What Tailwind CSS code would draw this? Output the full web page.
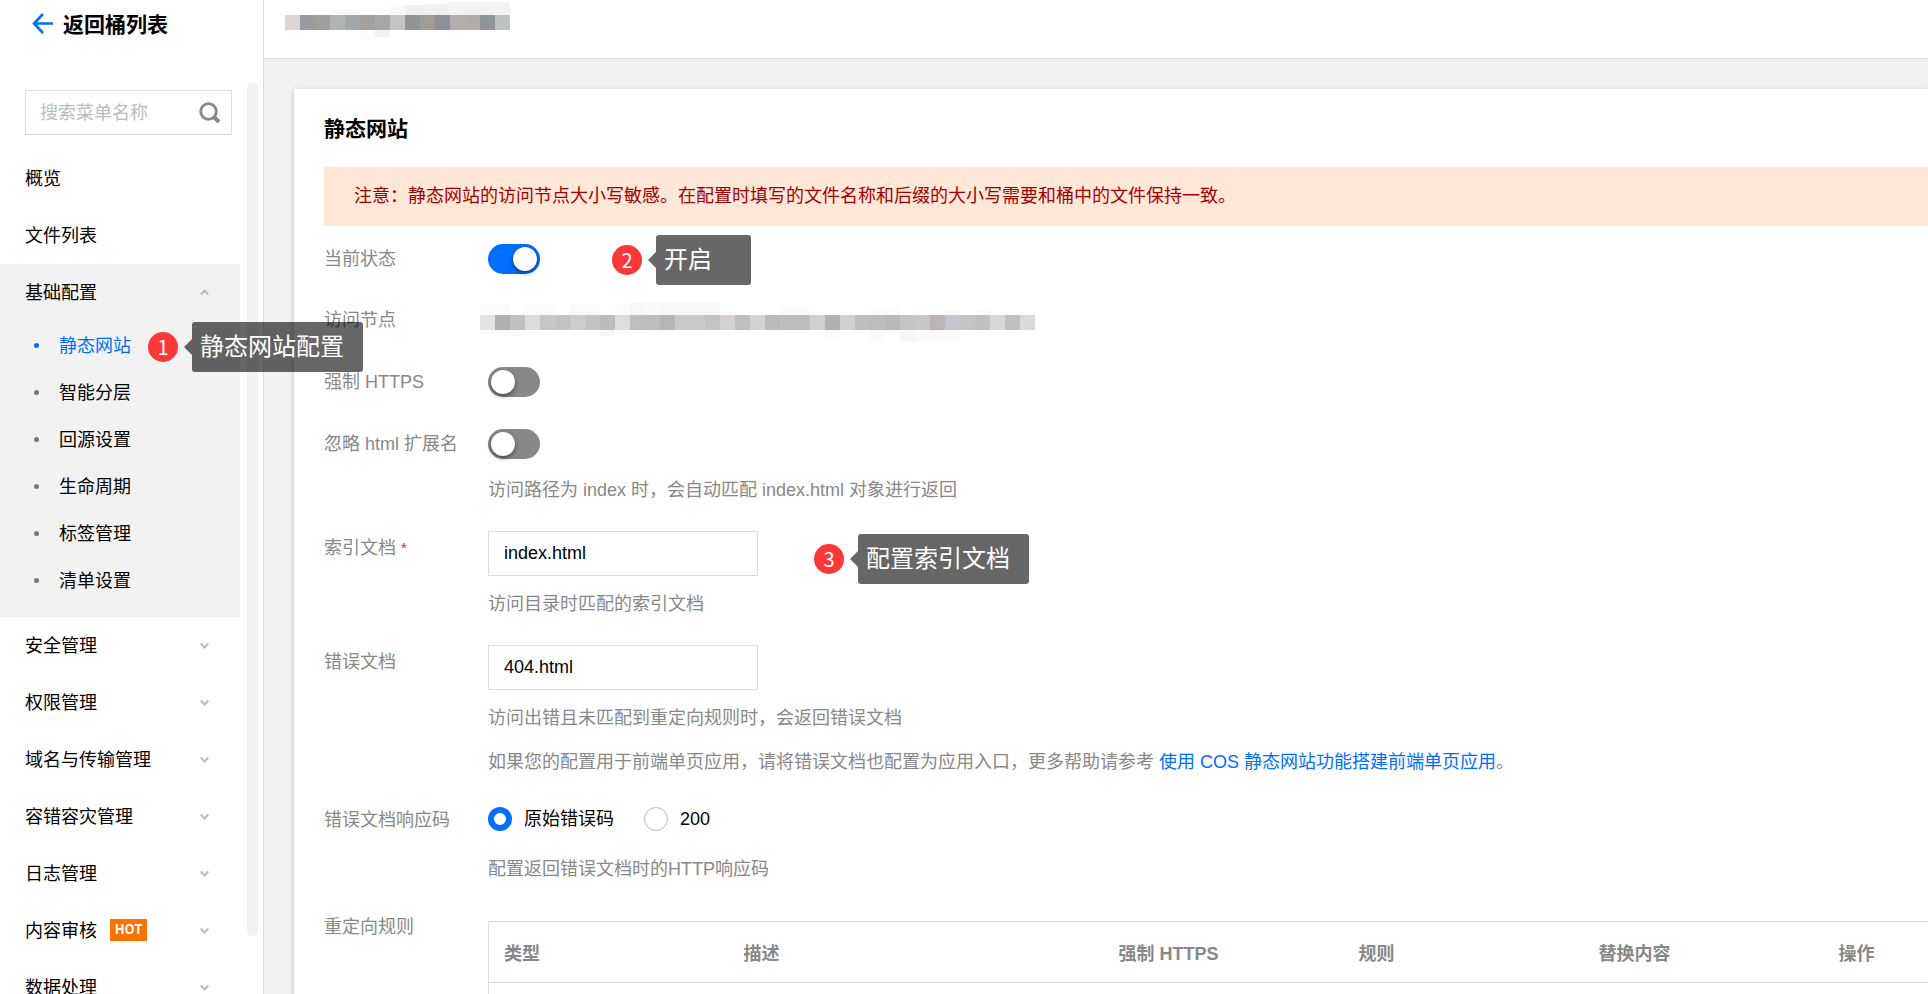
<!DOCTYPE html>
<html lang="zh-CN">
<head>
<meta charset="utf-8">
<title>静态网站</title>
<script src="https://cdn.jsdelivr.net/npm/@tailwindcss/browser@4"></script>
</head>
<body class="bg-white">
<div class="flex h-screen overflow-hidden bg-[#f2f2f2] font-['Liberation_Sans','Noto_Sans_CJK_SC',sans-serif] text-[18px] leading-6 text-black">

  <!-- Sidebar -->
  <aside class="relative z-10 w-[264px] shrink-0 border-r border-[#ddd] bg-white">
    <a href="#" class="flex h-[50px] items-center gap-[10px] pl-8 text-[21px] font-bold">
      <svg class="-mt-1 size-[21px]" viewBox="0 0 21 21" fill="none" stroke="#006eff" stroke-width="2.6" aria-hidden="true"><path d="M11 1 2 10.500l9 9.500M2 10.500h19"/></svg>
      <span>返回桶列表</span>
    </a>
    <div class="mt-10 mr-[31px] ml-[25px] flex h-[45px] items-center border border-[#ddd] pr-[10px] pl-[14px]">
      <input type="text" aria-label="搜索菜单名称" placeholder="搜索菜单名称" class="w-0 min-w-0 flex-1 outline-none placeholder:text-[#bbb]">
      <svg class="size-[22px]" viewBox="0 0 22 22" fill="none" stroke="#888" aria-hidden="true"><circle cx="9.500" cy="9.500" r="7.800" stroke-width="2.800"/><path d="m15 15 5 5" stroke-width="4"/></svg>
    </div>
    <div class="absolute top-[82px] right-[5px] bottom-[58px] w-[11px] rounded-full bg-[#f2f2f2]"></div>

    <nav class="mt-[15px] mr-[23px]">
      <a href="#" class="flex h-[57px] items-center pl-[25px]">概览</a>
      <a href="#" class="flex h-[57px] items-center pl-[25px]">文件列表</a>
      <div class="bg-[#f2f2f2] pb-[13px]">
        <button class="flex h-[57px] w-full items-center justify-between pr-[31px] pl-[25px]">基础配置
          <svg class="h-[7px] w-[9px]" viewBox="0 0 9 7" fill="none" stroke="#bbb" stroke-width="2" aria-hidden="true"><path d="m.7 5.500 3.800-4 3.800 4"/></svg></button>
        <ul class="pt-px">
          <li class="relative">
            <a href="#" class="flex h-[47px] items-center gap-5 pl-[34px] text-[#006eff]"><span class="size-[5px] rounded-full bg-[#006eff]"></span>静态网站</a>
            <div class="absolute top-0 left-[148px] flex items-center whitespace-nowrap">
              <span class="flex size-[30px] items-center justify-center rounded-full bg-[#fc3838] font-['Noto_Sans_CJK_SC',sans-serif] text-[20px] text-white">1</span>
              <svg class="ml-[6px] h-4 w-2" viewBox="0 0 8 16" fill="#000" fill-opacity=".6" aria-hidden="true"><path d="M0 8 8 0v16z"/></svg>
              <span class="flex h-[50px] min-w-[95px] items-center rounded-[3px] bg-black/60 pr-[19px] pl-2 text-[24px] text-white">静态网站配置</span>
            </div>
          </li>
          <li><a href="#" class="flex h-[47px] items-center gap-5 pl-[34px]"><span class="size-[5px] rounded-full bg-[#777]"></span>智能分层</a></li>
          <li><a href="#" class="flex h-[47px] items-center gap-5 pl-[34px]"><span class="size-[5px] rounded-full bg-[#777]"></span>回源设置</a></li>
          <li><a href="#" class="flex h-[47px] items-center gap-5 pl-[34px]"><span class="size-[5px] rounded-full bg-[#777]"></span>生命周期</a></li>
          <li><a href="#" class="flex h-[47px] items-center gap-5 pl-[34px]"><span class="size-[5px] rounded-full bg-[#777]"></span>标签管理</a></li>
          <li><a href="#" class="flex h-[47px] items-center gap-5 pl-[34px]"><span class="size-[5px] rounded-full bg-[#777]"></span>清单设置</a></li>
        </ul>
      </div>
      <button class="flex h-[57px] w-full items-center justify-between pr-[31px] pl-[25px]">安全管理
        <svg class="h-[7px] w-[9px]" viewBox="0 0 9 7" fill="none" stroke="#bbb" stroke-width="2" aria-hidden="true"><path d="m.7 1.500 3.800 4 3.800-4"/></svg></button>
      <button class="flex h-[57px] w-full items-center justify-between pr-[31px] pl-[25px]">权限管理
        <svg class="h-[7px] w-[9px]" viewBox="0 0 9 7" fill="none" stroke="#bbb" stroke-width="2" aria-hidden="true"><path d="m.7 1.500 3.800 4 3.800-4"/></svg></button>
      <button class="flex h-[57px] w-full items-center justify-between pr-[31px] pl-[25px]">域名与传输管理
        <svg class="h-[7px] w-[9px]" viewBox="0 0 9 7" fill="none" stroke="#bbb" stroke-width="2" aria-hidden="true"><path d="m.7 1.500 3.800 4 3.800-4"/></svg></button>
      <button class="flex h-[57px] w-full items-center justify-between pr-[31px] pl-[25px]">容错容灾管理
        <svg class="h-[7px] w-[9px]" viewBox="0 0 9 7" fill="none" stroke="#bbb" stroke-width="2" aria-hidden="true"><path d="m.7 1.500 3.800 4 3.800-4"/></svg></button>
      <button class="flex h-[57px] w-full items-center justify-between pr-[31px] pl-[25px]">日志管理
        <svg class="h-[7px] w-[9px]" viewBox="0 0 9 7" fill="none" stroke="#bbb" stroke-width="2" aria-hidden="true"><path d="m.7 1.500 3.800 4 3.800-4"/></svg></button>
      <button class="flex h-[57px] w-full items-center justify-between pr-[31px] pl-[25px]"><span class="flex items-start gap-[13px]">内容审核<span class="flex h-[22px] w-[37px] items-center justify-center bg-[#ff7200] pb-[2px] font-['Noto_Sans_CJK_SC',sans-serif] text-[13px] leading-none font-bold text-white">HOT</span></span>
        <svg class="h-[7px] w-[9px]" viewBox="0 0 9 7" fill="none" stroke="#bbb" stroke-width="2" aria-hidden="true"><path d="m.7 1.500 3.800 4 3.800-4"/></svg></button>
      <button class="flex h-[57px] w-full items-center justify-between pr-[31px] pl-[25px]">数据处理
        <svg class="h-[7px] w-[9px]" viewBox="0 0 9 7" fill="none" stroke="#bbb" stroke-width="2" aria-hidden="true"><path d="m.7 1.500 3.800 4 3.800-4"/></svg></button>
    </nav>
  </aside>

  <div class="flex min-w-0 flex-1 flex-col">
    <!-- Bucket name, masked -->
    <header class="h-[59px] shrink-0 border-b border-[#ddd] bg-white pl-[21px]">
      <svg class="h-[42px] w-[225px]" viewBox="0 0 225 42" shape-rendering="crispEdges" role="img" aria-label="存储桶名称">
        <path fill="#f9f9f9" d="M45 9h30v6H45zM105 5h15v10h-15z"/><path fill="#f0f0ee" d="M120 5h20v10h-20zM140 4h22v11h-22z"/><path fill="#f2f2f2" d="M162 2h63v13h-63z"/><path fill="#fcfcfc" d="M75 30h15v10H75z"/><path fill="#f1f3f3" d="M90 30h15v7H90z"/>
        <path fill="#dcd7d4" d="M0 15h15v15H0z"/><path fill="#969b9e" d="M15 15h15v15H15z"/><path fill="#9e9e9b" d="M30 15h15v15H30z"/><path fill="#aeb6b6" d="M45 15h15v15H45z"/><path fill="#a3a7a9" d="M60 15h15v15H60z"/><path fill="#a29f9d" d="M75 15h15v15H75z"/><path fill="#a3a8a9" d="M90 15h15v15H90z"/><path fill="#c4c4c4" d="M105 15h15v15h-15z"/><path fill="#8f9494" d="M120 15h15v15h-15z"/><path fill="#a09d96" d="M135 15h15v15h-15z"/><path fill="#8d9197" d="M150 15h15v15h-15z"/><path fill="#b3aeab" d="M165 15h15v15h-15z"/><path fill="#b2aca8" d="M180 15h15v15h-15z"/><path fill="#8e9697" d="M195 15h15v15h-15z"/><path fill="#bcc1c1" d="M210 15h15v15h-15z"/>
      </svg>
    </header>

    <main class="mt-[30px] ml-[30px] flex-1 bg-white pl-[30px] shadow-[0_2px_6px_rgba(0,0,0,0.2)]">
      <h1 class="pt-7 text-[21px] leading-6 font-bold">静态网站</h1>
      <p class="mt-[26px] bg-[#ffe7d7] py-[17px] pl-[30px] leading-[25px] text-[#a30000]">注意：静态网站的访问节点大小写敏感。在配置时填写的文件名称和后缀的大小写需要和桶中的文件保持一致。</p>

      <form class="pt-[18px] text-[#888]">
        <div class="mb-[31px] grid h-[30px] grid-cols-[164px_1fr]">
          <label for="status" class="pt-[3px]">当前状态</label>
          <div class="relative">
            <input id="status" type="checkbox" checked class="block h-[30px] w-[52px] appearance-none rounded-full bg-[#888] p-[3px] before:block before:size-6 before:rounded-full before:bg-white before:shadow-[0_2px_4px_rgba(0,0,0,0.5)] checked:bg-[#006eff] checked:before:ml-[22px]">
            <div class="absolute top-[-9px] left-[124px] flex items-center whitespace-nowrap">
              <span class="flex size-[30px] items-center justify-center rounded-full bg-[#fc3838] font-['Noto_Sans_CJK_SC',sans-serif] text-[20px] text-white">2</span>
              <svg class="ml-[6px] h-4 w-2" viewBox="0 0 8 16" fill="#000" fill-opacity=".6" aria-hidden="true"><path d="M0 8 8 0v16z"/></svg>
              <span class="flex h-[50px] min-w-[95px] items-center rounded-[3px] bg-black/60 pr-[19px] pl-2 text-[24px] text-white">开启</span>
            </div>
          </div>
        </div>

        <div class="mb-8 grid h-[30px] grid-cols-[164px_1fr]">
          <span class="pt-[3px]">访问节点</span>
          <div class="-mt-1 -ml-2">
            <svg class="h-[42px] w-[555px]" viewBox="0 0 555 42" shape-rendering="crispEdges" role="img" aria-label="访问节点地址">
              <path fill="#fbfbfb" d="M0 3h30v11H0zM45 3h30v11H45zM90 3h30v11H90zM135 3h15v11h-15zM300 6h30v8h-30zM390 8h30v6h-30zM465 9h15v5h-15zM495 9h15v5h-15zM15 29h30v6H15zM345 29h15v9h-15zM390 29h15v12h-15zM435 29h45v12h-45z"/><path fill="#f7f7f7" d="M150 2h15v12h-15zM180 1h15v13h-15zM195 1h45v13h-45zM120 29h15v6h-15zM420 29h15v12h-15z"/><path fill="#f9fbfb" d="M165 1h15v13h-15z"/>
              <path fill="#e3e3df" d="M0 14h15v15H0z"/><path fill="#b3adb0" d="M15 14h15v15H15z"/><path fill="#bfc0c3" d="M30 14h15v15H30z"/><path fill="#dbdbdc" d="M45 14h15v15H45z"/><path fill="#c5c6ca" d="M60 14h15v15H60z"/><path fill="#c6c0c0" d="M75 14h15v15H75z"/><path fill="#cbcdd0" d="M90 14h15v15H90z"/><path fill="#c0c2c5" d="M105 14h15v15h-15z"/><path fill="#babdbc" d="M120 14h15v15h-15z"/><path fill="#dddde1" d="M135 14h15v15h-15z"/><path fill="#bfbfbf" d="M150 14h15v15h-15z"/><path fill="#bdbdb9" d="M165 14h15v15h-15z"/><path fill="#b4b5b7" d="M180 14h15v15h-15z"/><path fill="#c8c9cd" d="M195 14h15v15h-15z"/><path fill="#cdc8c8" d="M210 14h15v15h-15z"/><path fill="#c2c2c7" d="M225 14h15v15h-15z"/><path fill="#d6d0d2" d="M240 14h15v15h-15z"/><path fill="#bfbfbf" d="M255 14h15v15h-15z"/><path fill="#d1d3d4" d="M270 14h15v15h-15z"/><path fill="#b9bbbf" d="M285 14h15v15h-15z"/><path fill="#bfbeba" d="M300 14h15v15h-15z"/><path fill="#bcbfba" d="M315 14h15v15h-15z"/><path fill="#d0d0d1" d="M330 14h15v15h-15z"/><path fill="#b2afb1" d="M345 14h15v15h-15z"/><path fill="#cfcfd1" d="M360 14h15v15h-15z"/><path fill="#bdbec2" d="M375 14h15v15h-15z"/><path fill="#bebdbb" d="M390 14h15v15h-15z"/><path fill="#bbb6bb" d="M405 14h15v15h-15z"/><path fill="#c6c3c3" d="M420 14h15v15h-15z"/><path fill="#c3c9cb" d="M435 14h15v15h-15z"/><path fill="#bcb5b4" d="M450 14h15v15h-15z"/><path fill="#c3c4cd" d="M465 14h15v15h-15z"/><path fill="#c5c3c5" d="M480 14h15v15h-15z"/><path fill="#c2bfc1" d="M495 14h15v15h-15z"/><path fill="#d8d7d6" d="M510 14h15v15h-15z"/><path fill="#c1bfc5" d="M525 14h15v15h-15z"/><path fill="#d8dadb" d="M540 14h15v15h-15z"/>
            </svg>
          </div>
        </div>

        <div class="mb-8 grid h-[30px] grid-cols-[164px_1fr]">
          <label for="https" class="pt-[3px]">强制 HTTPS</label>
          <input id="https" type="checkbox" class="block h-[30px] w-[52px] appearance-none rounded-full bg-[#888] p-[3px] before:block before:size-6 before:rounded-full before:bg-white before:shadow-[0_2px_4px_rgba(0,0,0,0.5)] checked:bg-[#006eff] checked:before:ml-[22px]">
        </div>

        <div class="mb-[29px] grid grid-cols-[164px_1fr]">
          <label for="ext" class="pt-[3px]">忽略 html 扩展名</label>
          <div>
            <input id="ext" type="checkbox" class="block h-[30px] w-[52px] appearance-none rounded-full bg-[#888] p-[3px] before:block before:size-6 before:rounded-full before:bg-white before:shadow-[0_2px_4px_rgba(0,0,0,0.5)] checked:bg-[#006eff] checked:before:ml-[22px]">
            <p class="mt-[19px]">访问路径为 index 时，会自动匹配 index.html 对象进行返回</p>
          </div>
        </div>

        <div class="mb-[29px] grid grid-cols-[164px_1fr]">
          <label for="index" class="flex items-start gap-[5px] pt-[5px]">索引文档<span class="text-[15px] text-[#e1251b]">*</span></label>
          <div class="relative">
            <input id="index" type="text" value="index.html" class="block h-[45px] w-[270px] border border-[#ddd] px-[15px] text-black">
            <p class="mt-4">访问目录时匹配的索引文档</p>
            <div class="absolute top-[3px] left-[326px] flex items-center whitespace-nowrap">
              <span class="flex size-[30px] items-center justify-center rounded-full bg-[#fc3838] font-['Noto_Sans_CJK_SC',sans-serif] text-[20px] text-white">3</span>
              <svg class="ml-[6px] h-4 w-2" viewBox="0 0 8 16" fill="#000" fill-opacity=".6" aria-hidden="true"><path d="M0 8 8 0v16z"/></svg>
              <span class="flex h-[50px] min-w-[95px] items-center rounded-[3px] bg-black/60 pr-[19px] pl-2 text-[24px] text-white">配置索引文档</span>
            </div>
          </div>
        </div>

        <div class="mb-[29px] grid grid-cols-[164px_1fr]">
          <label for="error" class="pt-[5px]">错误文档</label>
          <div>
            <input id="error" type="text" value="404.html" class="block h-[45px] w-[270px] border border-[#ddd] px-[15px] text-black">
            <p class="mt-4">访问出错且未匹配到重定向规则时，会返回错误文档</p>
            <p class="mt-5">如果您的配置用于前端单页应用，请将错误文档也配置为应用入口，更多帮助请参考 <a href="#" class="text-[#006eff]">使用 COS 静态网站功能搭建前端单页应用</a>。</p>
          </div>
        </div>

        <div class="mb-[29px] grid grid-cols-[164px_1fr]" role="radiogroup" aria-labelledby="code">
          <span id="code" class="pt-[5px]">错误文档响应码</span>
          <div class="pt-1">
            <div class="flex h-6 items-center gap-[30px] text-black">
              <label class="flex items-center gap-3"><input type="radio" name="code" checked class="size-6 appearance-none rounded-full border border-[#bbb] checked:border-6 checked:border-[#006eff]">原始错误码</label>
              <label class="flex items-center gap-3"><input type="radio" name="code" class="size-6 appearance-none rounded-full border border-[#bbb] checked:border-6 checked:border-[#006eff]">200</label>
            </div>
            <p class="mt-[26px]">配置返回错误文档时的HTTP响应码</p>
          </div>
        </div>

        <div class="grid grid-cols-[164px_1fr]">
          <span class="pt-[5px]">重定向规则</span>
          <table class="mt-[11px] w-full table-fixed border-collapse border-t border-l border-[#ddd] text-left">
            <colgroup><col class="w-[240px]"><col class="w-[375px]"><col class="w-[240px]"><col class="w-[240px]"><col class="w-[240px]"><col></colgroup>
            <thead>
              <tr class="h-[61px] border-b border-[#ddd]">
                <th class="pt-1 pl-[15px] font-bold">类型</th><th class="pt-1 pl-[15px] font-bold">描述</th><th class="pt-1 pl-[15px] font-bold">强制 HTTPS</th><th class="pt-1 pl-[15px] font-bold">规则</th><th class="pt-1 pl-[15px] font-bold">替换内容</th><th class="pt-1 pl-[15px] font-bold">操作</th>
              </tr>
            </thead>
            <tbody><tr class="h-[61px]"><td colspan="6"></td></tr></tbody>
          </table>
        </div>
      </form>
    </main>
  </div>
</div>
</body>
</html>
